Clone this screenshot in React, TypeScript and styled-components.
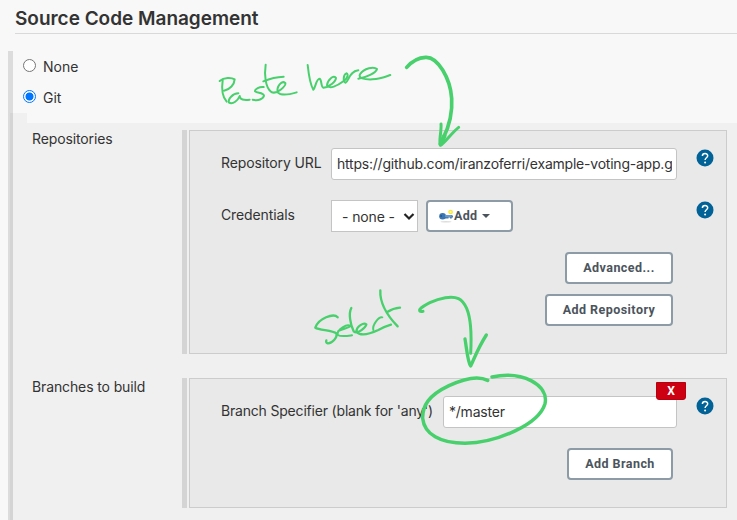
import React from 'react';
import styled, { createGlobalStyle } from 'styled-components';

const Global = createGlobalStyle`
  *, *::before, *::after { box-sizing: border-box; }
  body { margin: 0; background: #f8f8f8; overflow: hidden; }
`;

const Page = styled.main`
  position: relative;
  display: flex;
  flex-direction: column;
  width: 737px;
  height: 520px;
  overflow: hidden;
  background: #f8f8f8;
  color: #333;
  font: 14px/20px Inter, 'Liberation Sans', sans-serif;
`;

const Heading = styled.h1`
  height: 34px;
  margin: 0 0 17px 15px;
  padding-top: 7px;
  border-bottom: 1px solid #d9d9d9;
  font-size: 19px;
  font-weight: 600;
  line-height: 24px;
  letter-spacing: -0.02px;
  white-space: nowrap;
`;

const Section = styled.section`
  flex: 1;
  display: flex;
  padding-left: 8px;
`;

const Rail = styled.div`
  width: 5px;
  background: linear-gradient(#d4d4d4, #d4d4d4) 2px 62px no-repeat, #dcdcdc;
`;

const Content = styled.div`
  flex: 1;
  display: flex;
  flex-direction: column;
`;

const Choices = styled.div`
  height: 62px;
  padding-left: 10px;
`;

const Choice = styled.label`
  display: flex;
  align-items: center;
  gap: 7px;
  height: 31px;
  padding-top: 1px;
`;

const Radio = styled.span<{ $on?: boolean }>`
  width: 13px;
  height: 13px;
  margin-top: -4px;
  border: 1px solid ${p => (p.$on ? '#0075ff' : '#767676')};
  border-radius: 50%;
  background: ${p => (p.$on ? 'radial-gradient(circle, #0075ff 3.6px, #fff 4.4px)' : '#fff')};
`;

const Tab = styled.div`
  width: 14px;
  height: 10px;
  background: #f0f0f0;
`;

const Details = styled.div`
  flex: 1;
  display: flex;
  flex-direction: column;
  gap: 24px;
  padding: 7px 10px 0 19px;
  background: #f0f0f0;
`;

const Group = styled.div<{ $height: number }>`
  display: grid;
  grid-template-columns: 150px 5px 540px;
  height: ${p => p.$height}px;
`;

const GroupName = styled.div`
  margin-top: -1px;
  letter-spacing: -0.12px;
`;

const Bar = styled.div`
  background: #d4d4d4;
`;

const Box = styled.div`
  display: flex;
  flex-direction: column;
  margin-left: 2px;
  padding: 17px 12px 0 31px;
  border: 1px solid #ccc;
  background: #e9e9e9;
`;

const Field = styled.div<{ $label: number }>`
  display: grid;
  grid-template-columns: ${p => p.$label}px minmax(0, 1fr) 18px;
  align-items: start;
  margin-bottom: 20px;
`;

const Label = styled.div<{ $spacing?: number }>`
  padding-top: 5px;
  white-space: nowrap;
  letter-spacing: ${p => p.$spacing ?? -0.12}px;
`;

const InputFrame = styled.div`
  position: relative;
  margin-right: 19px;
`;

const Input = styled.div`
  height: 32px;
  padding: 0 4px 0 5px;
  border: 1px solid #c4c4c4;
  border-radius: 3px;
  background: #fff;
  line-height: 30px;
  letter-spacing: -0.22px;

  span { display: block; overflow: hidden; white-space: nowrap; }
`;

const Controls = styled.div`
  display: flex;
  gap: 8px;
`;

const Select = styled.div`
  display: flex;
  align-items: center;
  justify-content: space-between;
  width: 87px;
  height: 32px;
  padding: 2px 2px 0 10px;
  border: 1px solid #c4c4c4;
  background: #fff;
  letter-spacing: -0.12px;
  white-space: nowrap;
`;

const Button = styled.button<{ $width: number }>`
  display: flex;
  align-items: center;
  justify-content: center;
  width: ${p => p.$width}px;
  height: 32px;
  padding: 0;
  border: 2px solid #8c9ba5;
  border-radius: 4px;
  background: #fff;
  color: #4b545c;
  font: 700 12.5px/16px Roboto, 'Liberation Sans', sans-serif;
  letter-spacing: 0.45px;
`;

const MenuButton = styled(Button)`
  justify-content: flex-start;
  padding-left: 10px;
  letter-spacing: 0.3px;
`;

const Actions = styled.div`
  display: flex;
  flex-direction: column;
  align-items: flex-end;
  gap: 10px;
  margin-right: 41px;
`;

const Remove = styled.button`
  position: absolute;
  top: -14px;
  right: -9px;
  width: 30px;
  height: 18px;
  padding: 0;
  border: 1px solid #b9000f;
  border-radius: 0 0 3px 3px;
  background: #cc0010;
  color: #fff;
  font: 700 12px/16px Roboto, sans-serif;
`;

const HelpSvg = styled.svg`
  margin-top: 1px;
`;

const Ink = styled.svg`
  position: absolute;
  inset: 0;
  fill: none;
  stroke: #48d06c;
  stroke-linecap: round;
  stroke-linejoin: round;
  pointer-events: none;
`;

const Help = () => (
  <HelpSvg width="18" height="18" viewBox="0 0 18 18" aria-label="Help">
    <circle cx="9" cy="9" r="8.5" fill="#006297" />
    <path d="M6.4 7c0-3.3 5.3-3.3 5.3-.2 0 1.9-2.6 2.1-2.6 4.2" fill="none" stroke="#fff" strokeWidth="1.5" />
    <circle cx="9.1" cy="13.5" r="1" fill="#fff" />
  </HelpSvg>
);

const KeyIcon = () => (
  <svg width="16" height="16" viewBox="0 0 16 16">
    <ellipse cx="8" cy="13.8" rx="5.5" ry=".8" fill="#ddd" />
    <circle cx="12.6" cy="4" r="1.7" fill="#fffbb0" stroke="#fbe63c" strokeWidth="1.3" />
    <path d="M6.5 6.9H14l1 1v1.5h-1.2v1H12v-1h-1.5v1H7z" fill="#4a7fb5" />
    <ellipse cx="4.6" cy="8.3" rx="3.4" ry="3.3" fill="#3975b3" />
    <circle cx="3.1" cy="8" r=".8" fill="#183f70" />
    <path d="M7 8h6.5" stroke="#8ab4d8" />
  </svg>
);

const Caret = styled.svg`
  margin-left: 5px;
`;

const Annotations = () => (
  <Ink width="737" height="520" viewBox="0 0 737 520">
    <g transform="translate(210 50) scale(.33333)" strokeWidth="6">
      <path d="M29 93C42 81 65 82 74 88C73 103 60 119 42 122" />
      <path d="M38 91C35 112 36 139 50 155" />
      <path d="M85 130C68 130 53 148 57 158C69 164 84 151 89 138C89 149 102 151 119 149" />
      <path d="M161 111C149 109 134 117 135 124C142 130 160 127 162 137C160 148 144 153 128 149" />
      <path d="M167 44C163 72 165 112 184 126C202 135 229 106 226 99C215 90 199 109 203 127C214 139 240 133 260 127" />
      <path d="M160 94Q191 81 221 80" />
    </g>
    <g transform="translate(304 56) scale(.33333)" strokeWidth="6">
      <path d="M11 27C14 55 20 88 28 101C35 95 36 68 47 68C54 72 50 93 58 95C75 94 96 76 96 66C90 54 70 72 69 88C76 100 100 90 118 76C130 68 135 54 127 52C118 55 116 78 125 80C135 75 136 45 163 43" />
      <path d="M163 68C185 66 217 50 219 39C210 31 180 35 168 55C162 66 180 71 205 70C230 69 245 62 259 57" />
    </g>
    <g transform="translate(300 50) scale(.33333)">
      <path d="M320 52C333 37 353 23 377 22C413 20 451 85 455 145C458 190 447 229 430 264" strokeWidth="11" />
      <path d="M423 222C425 244 416 271 421 286C434 280 455 248 476 232" strokeWidth="9" />
      <path d="M422 282L433 258" strokeWidth="13" />
    </g>
    <g transform="translate(300 285) scale(.33333)">
      <path d="M113 97C101 83 55 100 46 128C58 136 98 135 109 145C113 158 96 176 83 175C78 174 78 169 79 166" strokeWidth="7" />
      <path d="M154 69C145 85 151 119 161 139C174 150 198 125 199 118C191 112 170 123 169 140C180 153 207 148 235 135C252 126 266 121 273 119" strokeWidth="7" />
      <path d="M115 138C127 133 149 126 151 124C143 115 110 133 113 150C123 156 141 153 156 151" strokeWidth="6" />
      <path d="M247 97C237 94 216 119 220 135" strokeWidth="6" />
      <path d="M241 16C239 55 262 92 293 124M262 81Q279 70 300 68" strokeWidth="7" />
      <path d="M369 79C365 80 358 80 359 74C369 61 405 43 436 38C470 33 486 40 500 70C513 101 515 152 512 205" strokeWidth="9" />
      <path d="M495 162C500 190 503 232 512 243C523 220 534 189 559 150" strokeWidth="10" />
    </g>
    <g transform="translate(410 365) scale(.33333)" strokeWidth="10.5">
      <path d="M233 46C206 32 166 39 117 62C56 91 37 122 38 160C43 208 91 235 165 235C264 233 387 177 405 116C417 60 338 16 246 36" />
    </g>
  </Ink>
);

export default function App() {
  return (
    <>
      <Global />
      <Page>
        <Heading>Source Code Management</Heading>
        <Section>
          <Rail />
          <Content>
            <Choices>
              <Choice><Radio />None</Choice>
              <Choice><Radio $on />Git</Choice>
            </Choices>
            <Tab />
            <Details>
              <Group $height={224}>
                <GroupName>Repositories</GroupName>
                <Bar />
                <Box>
                  <Field $label={110}>
                    <Label>Repository URL</Label>
                    <InputFrame>
                      <Input><span>https://github.com/iranzoferri/example-voting-app.g</span></Input>
                    </InputFrame>
                    <Help />
                  </Field>
                  <Field $label={110}>
                    <Label>Credentials</Label>
                    <Controls>
                      <Select>
                        - none -
                        <svg width="12" height="10" viewBox="0 0 12 10">
                          <path d="m1.5 2 4.5 4.5L10.5 2" fill="none" stroke="#222" strokeWidth="2.2" />
                        </svg>
                      </Select>
                      <MenuButton $width={87}>
                        <KeyIcon />Add
                        <Caret width="8" height="4" viewBox="0 0 8 4"><path d="M0 0h8L4 4z" fill="#4b545c" /></Caret>
                      </MenuButton>
                    </Controls>
                    <Help />
                  </Field>
                  <Actions>
                    <Button $width={108}>Advanced...</Button>
                    <Button $width={128}>Add Repository</Button>
                  </Actions>
                </Box>
              </Group>
              <Group $height={130}>
                <GroupName>Branches to build</GroupName>
                <Bar />
                <Box>
                  <Field $label={222}>
                    <Label $spacing={-0.19}>Branch Specifier (blank for 'any')</Label>
                    <InputFrame>
                      <Input><span>*/master</span></Input>
                      <Remove>X</Remove>
                    </InputFrame>
                    <Help />
                  </Field>
                  <Actions>
                    <Button $width={106}>Add Branch</Button>
                  </Actions>
                </Box>
              </Group>
            </Details>
          </Content>
        </Section>
        <Annotations />
      </Page>
    </>
  );
}
